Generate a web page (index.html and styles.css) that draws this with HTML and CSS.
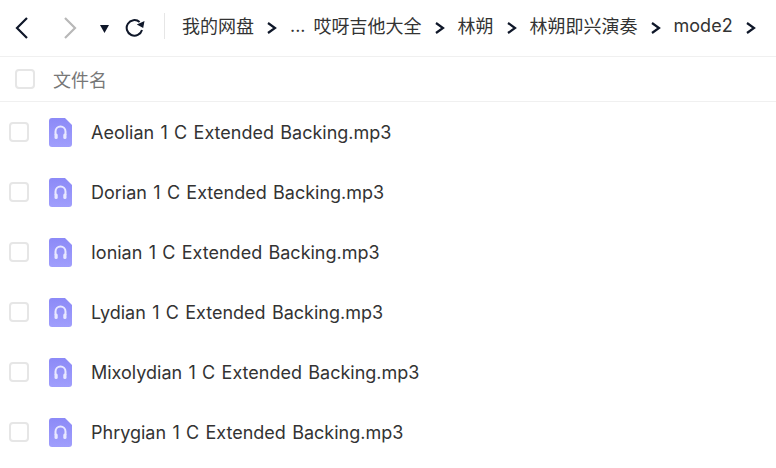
FILE: index.html
```html
<!DOCTYPE html>
<html>
<head>
    <title>文件列表</title>
    <link rel="stylesheet" href="styles.css">
</head>
<body>
    <div class="toolbar">
        <svg class="nav-back" width="16" height="26" viewBox="0 0 16 26"><path d="M12 3 L2 13 L12 23" fill="none" stroke="#0f1729" stroke-width="2.2"/></svg>
        <svg class="nav-forward" width="16" height="26" viewBox="0 0 16 26"><path d="M2 3 L12 13 L2 23" fill="none" stroke="#b8b8b8" stroke-width="2.2"/></svg>
        <svg class="nav-drop" width="9" height="8" viewBox="0 0 9 8"><path d="M0 0 H9 L4.5 8 Z" fill="#0f1729"/></svg>
        <svg class="nav-refresh" width="20" height="20" viewBox="0 0 20 20"><path d="M17 12 A7.8 7.8 0 1 1 14.6 4" fill="none" stroke="#0f1729" stroke-width="2"/><path d="M19.5 3 L18.2 10 L11.8 6.6 Z" fill="#0f1729"/></svg>
        <div class="divider"></div>
        <div class="crumbs">
            <span class="crumb">我的网盘</span>
            <svg class="sep" width="10" height="12" viewBox="0 0 10 12"><path d="M1 1 L8 6 L1 11" fill="none" stroke="#0f1729" stroke-width="2.2"/></svg>
            <span class="crumb crumb-more">...</span>
            <span class="crumb">哎呀吉他大全</span>
            <svg class="sep" width="10" height="12" viewBox="0 0 10 12"><path d="M1 1 L8 6 L1 11" fill="none" stroke="#0f1729" stroke-width="2.2"/></svg>
            <span class="crumb">林朔</span>
            <svg class="sep" width="10" height="12" viewBox="0 0 10 12"><path d="M1 1 L8 6 L1 11" fill="none" stroke="#0f1729" stroke-width="2.2"/></svg>
            <span class="crumb">林朔即兴演奏</span>
            <svg class="sep" width="10" height="12" viewBox="0 0 10 12"><path d="M1 1 L8 6 L1 11" fill="none" stroke="#0f1729" stroke-width="2.2"/></svg>
            <span class="crumb">mode2</span>
            <svg class="sep" width="10" height="12" viewBox="0 0 10 12"><path d="M1 1 L8 6 L1 11" fill="none" stroke="#0f1729" stroke-width="2.2"/></svg>
        </div>
    </div>

    <div class="list-head">
        <span class="check"></span>
        <span class="head-name">文件名</span>
    </div>

    <div class="file-list">
        <div class="file-row">
            <span class="check"></span>
            <svg class="file-icon" width="24" height="30" viewBox="0 0 24 30"><use href="#audio"/></svg>
            <span class="file-name">Aeolian 1 C Extended Backing.mp3</span>
        </div>
        <div class="file-row">
            <span class="check"></span>
            <svg class="file-icon" width="24" height="30" viewBox="0 0 24 30"><use href="#audio"/></svg>
            <span class="file-name">Dorian 1 C Extended Backing.mp3</span>
        </div>
        <div class="file-row">
            <span class="check"></span>
            <svg class="file-icon" width="24" height="30" viewBox="0 0 24 30"><use href="#audio"/></svg>
            <span class="file-name">Ionian 1 C Extended Backing.mp3</span>
        </div>
        <div class="file-row">
            <span class="check"></span>
            <svg class="file-icon" width="24" height="30" viewBox="0 0 24 30"><use href="#audio"/></svg>
            <span class="file-name">Lydian 1 C Extended Backing.mp3</span>
        </div>
        <div class="file-row">
            <span class="check"></span>
            <svg class="file-icon" width="24" height="30" viewBox="0 0 24 30"><use href="#audio"/></svg>
            <span class="file-name">Mixolydian 1 C Extended Backing.mp3</span>
        </div>
        <div class="file-row">
            <span class="check"></span>
            <svg class="file-icon" width="24" height="30" viewBox="0 0 24 30"><use href="#audio"/></svg>
            <span class="file-name">Phrygian 1 C Extended Backing.mp3</span>
        </div>
    </div>

    <svg class="defs" width="0" height="0">
        <defs>
            <linearGradient id="audioFill" x1="0" y1="0" x2="0" y2="1">
                <stop offset="0" stop-color="#8c8af7"/>
                <stop offset="1" stop-color="#a09efc"/>
            </linearGradient>
            <g id="audio">
                <path d="M3 0 H16 L23 7 V26 A3 3 0 0 1 20 29 H3 A3 3 0 0 1 0 26 V3 A3 3 0 0 1 3 0 Z" fill="url(#audioFill)"/>
                <path d="M6.5 17 V13.5 A5 5 0 0 1 16.5 13.5 V17" fill="none" stroke="#e8e8ff" stroke-width="2"/>
                <rect x="5.5" y="15.5" width="3.2" height="5.5" rx="1.5" fill="#e8e8ff"/>
                <rect x="14.3" y="15.5" width="3.2" height="5.5" rx="1.5" fill="#e8e8ff"/>
            </g>
        </defs>
    </svg>
</body>
</html>
```

FILE: styles.css
```css
body {
    margin: 0;
    height: 468px;
    overflow: hidden;
    background-color: #ffffff;
    font-family: "Inter", "Noto Sans CJK SC", sans-serif;
    color: #333333;
}

.toolbar {
    display: flex;
    align-items: center;
    height: 56px;
    border-bottom: 1px solid #f0f0f0;
    padding-left: 15px;
}

.nav-forward {
    margin-left: 32px;
}

.nav-drop {
    margin-left: 21px;
    margin-top: 2px;
}

.nav-refresh {
    margin-left: 16px;
}

.divider {
    width: 1px;
    height: 26px;
    margin-left: 19px;
    margin-top: -4px;
    background-color: #e6e6e6;
}

.crumbs {
    display: flex;
    align-items: center;
    margin-left: 17px;
    margin-top: -6px;
    font-size: 18px;
}

.crumb {
    white-space: nowrap;
}

.crumb-more {
    margin-right: 8px;
}

.sep {
    margin: 6px 13px 0 13px;
}

.list-head {
    display: flex;
    align-items: center;
    height: 44px;
    border-bottom: 1px solid #f0f0f0;
    padding-left: 15px;
}

.head-name {
    margin-left: 18px;
    font-size: 18px;
    color: #777777;
}

.check {
    box-sizing: border-box;
    width: 20px;
    height: 20px;
    border: 2px solid #e6e6e6;
    border-radius: 4px;
    flex-shrink: 0;
}

.file-row {
    display: flex;
    align-items: center;
    height: 60px;
    padding-left: 9px;
}

.file-icon {
    margin-left: 20px;
    margin-top: 2px;
}

.file-name {
    margin-left: 18px;
    font-size: 18px;
    word-spacing: 1.25px;
    white-space: nowrap;
}

.defs {
    position: absolute;
}
```
